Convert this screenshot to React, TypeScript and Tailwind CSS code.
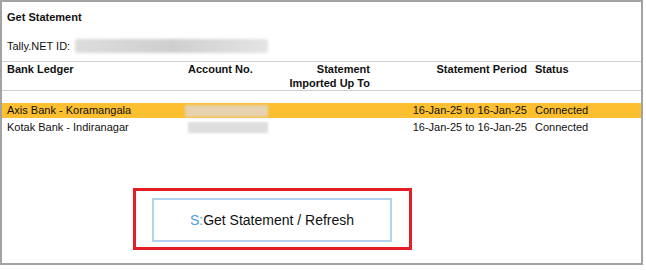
import React from "react";

export default function App() {
  return (
    <div className="w-[646px] h-[270px] bg-white font-['Liberation_Sans',Arial,sans-serif] text-[11px] text-[#111]">
      <div className="w-[643px] h-[265px] border-2 border-[#a3a3a3] flex flex-col">
        <div className="pl-[5px] pt-[8px] h-[22px] leading-[14px] font-bold">Get Statement</div>
        <div className="mt-[13px] pl-[5px] h-[18px] flex items-center">
          <span className="leading-[14px] w-[68px]">Tally.NET ID:</span>
          <div className="w-[193px] h-[14px] rounded-[3px] bg-gradient-to-r from-[#dcdcdc] via-[#cfcfcf] to-[#e4e4e4] blur-[1.5px]" />
        </div>
        <div className="mt-[6px] border-t border-b border-[#cfcfcf] h-[30px] pl-[5px] grid grid-cols-[181px_90px_92px_157px_auto] font-bold leading-[14px]">
          <div>Bank Ledger</div>
          <div>Account No.</div>
          <div className="text-right">Statement<br />Imported Up To</div>
          <div className="text-right">Statement Period</div>
          <div className="pl-[8px]">Status</div>
        </div>
        <div className="mt-[12px] h-[15px] leading-[15px] bg-[#fbbf2f] pl-[5px] grid grid-cols-[181px_90px_92px_157px_auto]">
          <div>Axis Bank - Koramangala</div>
          <div className="flex items-center -ml-[3px]">
            <div className="w-[83px] h-[12px] bg-[#e6d2ae] blur-[1px]" />
          </div>
          <div />
          <div className="text-right">16-Jan-25 to 16-Jan-25</div>
          <div className="pl-[8px]">Connected</div>
        </div>
        <div className="mt-[2px] h-[15px] leading-[15px] pl-[5px] grid grid-cols-[181px_90px_92px_157px_auto]">
          <div>Kotak Bank - Indiranagar</div>
          <div className="flex items-center">
            <div className="w-[80px] h-[11px] bg-[#dedede] blur-[1px]" />
          </div>
          <div />
          <div className="text-right">16-Jan-25 to 16-Jan-25</div>
          <div className="pl-[8px]">Connected</div>
        </div>
        <div className="mt-[53px] ml-[131px] w-[279px] h-[62px] border-[3px] border-[#e31e26] pl-[16px] pt-[7px]">
          <div className="w-[240px] h-[44px] border-2 border-[#b3d2ee] flex items-center justify-center text-[14px] leading-[16px]">
            <span className="text-[#4b9fe0]">S:</span>
            <span>Get Statement / Refresh</span>
          </div>
        </div>
      </div>
    </div>
  );
}
